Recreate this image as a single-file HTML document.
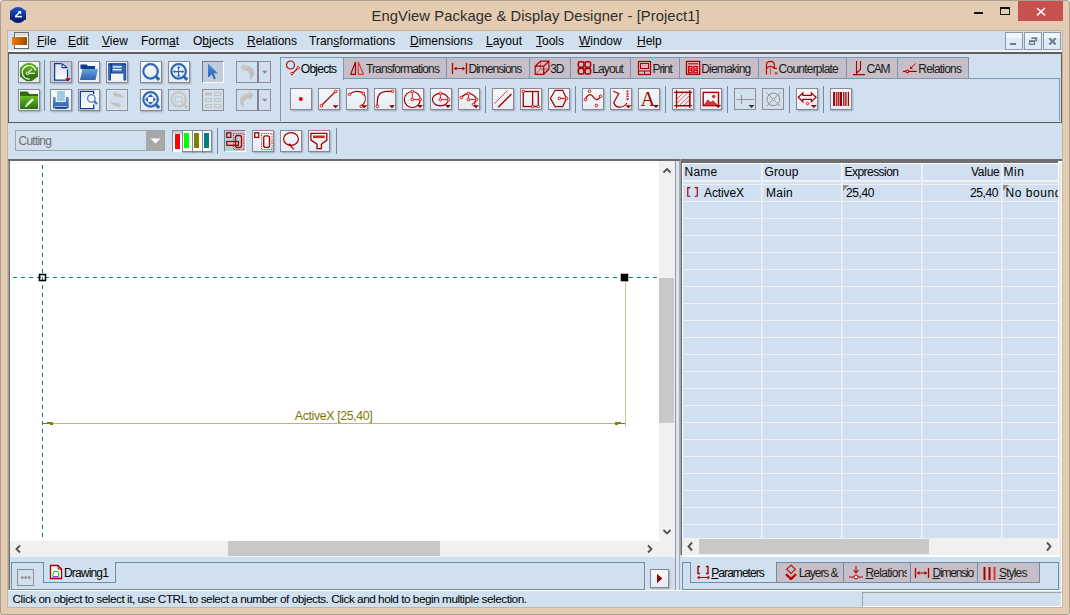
<!DOCTYPE html>
<html><head><meta charset="utf-8"><style>
*{box-sizing:border-box;margin:0;padding:0}
html,body{width:1070px;height:615px;overflow:hidden;background:#fff;font-family:"Liberation Sans",sans-serif;font-size:12px;color:#000}
.a{position:absolute}
.t{position:absolute;white-space:nowrap;line-height:1}
.btn{position:absolute;width:22px;height:22px;border:1px solid #8A8794;background:linear-gradient(#f4f7fb,#e7edf4);box-shadow:1px 1px 1px rgba(70,80,100,.30)}
.btn.sel{background:#C8CFDB}
.btn svg{position:absolute;left:0;top:0}
.sep{position:absolute;width:1px;background:#7288A4}
.tab{position:absolute;height:21px;background:#C6BFC7;border:1px solid #7E96B2;border-bottom:none}
.tab .t{font-size:12px;color:#1a1a1a}
.u{text-decoration:underline}
</style></head><body>
<div class="a" style="left:0;top:0;width:1070px;height:615px;background:#E3CCB2;border:1px solid #AD9E8F;border-radius:3px 3px 2px 2px"></div>
<div class="a" style="left:7px;top:30px;width:1056px;height:578px;border:1px solid #C8B39D;background:#D1E0EF"></div>
<div class="t" style="left:371.6px;top:9px;font-size:14.75px;color:#2E2E2E;letter-spacing:0.08px">EngView Package &amp; Display Designer - [Project1]</div>
<svg class="a" style="left:9px;top:6px;" width="18" height="18" viewBox="0 0 18 18"><defs><linearGradient id="ig" x1="0" y1="0" x2="0" y2="1"><stop offset="0" stop-color="#1E50C4"/><stop offset="1" stop-color="#001868"/></linearGradient></defs><rect x="1" y="4.3" width="16" height="9.5" fill="url(#ig)"/><circle cx="9" cy="9" r="8" fill="url(#ig)"/><path d="M6 10.6h7" stroke="#fff" stroke-width="1.5"/><path d="M6.6 10.3l4.8-4.8" stroke="#fff" stroke-width="1.4"/><path d="M8.6 5h3.6v3.6z" fill="#fff"/></svg>
<div class="a" style="left:974px;top:12px;width:9px;height:2px;background:#111;"></div>
<div class="a" style="left:1000px;top:7px;width:10px;height:8px;border:1px solid #111;border-top-width:2px"></div>
<div class="a" style="left:1018px;top:1px;width:45px;height:20px;background:#C75050;"></div>
<svg class="a" style="left:1036px;top:7px;" width="10" height="10" viewBox="0 0 10 10"><path d="M1 1l8 7.3M9 1l-8 7.3" stroke="#fff" stroke-width="1.6"/></svg>
<div class="a" style="left:8px;top:31px;width:1054px;height:19px;background:#D1E0EF;"></div>
<div class="a" style="left:8px;top:50px;width:1054px;height:2px;background:#F2F5F8;"></div>
<div class="a" style="left:8px;top:52px;width:1054px;height:2px;background:#5F5F5F;"></div>
<div class="a" style="left:14px;top:32px;width:15px;height:17px;border:1px solid #6b6b6b;background:#fff"></div>
<div class="a" style="left:15px;top:33px;width:13px;height:3px;background:#ddd;"></div>
<div class="a" style="left:12px;top:37px;width:15px;height:8px;background:linear-gradient(90deg,#F47B00,#9A4A00);"></div>
<div class="t" style="left:37px;top:35px;font-size:12px;color:#000;"><span class="u">F</span>ile</div>
<div class="t" style="left:68px;top:35px;font-size:12px;color:#000;"><span class="u">E</span>dit</div>
<div class="t" style="left:102px;top:35px;font-size:12px;color:#000;"><span class="u">V</span>iew</div>
<div class="t" style="left:141px;top:35px;font-size:12px;color:#000;">Form<span class="u">a</span>t</div>
<div class="t" style="left:193px;top:35px;font-size:12px;color:#000;">O<span class="u">b</span>jects</div>
<div class="t" style="left:247px;top:35px;font-size:12px;color:#000;"><span class="u">R</span>elations</div>
<div class="t" style="left:309px;top:35px;font-size:12px;color:#000;">Tran<span class="u">s</span>formations</div>
<div class="t" style="left:410px;top:35px;font-size:12px;color:#000;"><span class="u">D</span>imensions</div>
<div class="t" style="left:486px;top:35px;font-size:12px;color:#000;"><span class="u">L</span>ayout</div>
<div class="t" style="left:536px;top:35px;font-size:12px;color:#000;"><span class="u">T</span>ools</div>
<div class="t" style="left:579px;top:35px;font-size:12px;color:#000;"><span class="u">W</span>indow</div>
<div class="t" style="left:637px;top:35px;font-size:12px;color:#000;"><span class="u">H</span>elp</div>
<div class="a" style="left:1005px;top:32px;width:18px;height:18px;border:1px solid #8C9BAE;background:linear-gradient(#F0F6FC 0,#F0F6FC 30%,#DEEAF6 30%,#DEEAF6)"></div>
<div class="a" style="left:1024px;top:32px;width:18px;height:18px;border:1px solid #8C9BAE;background:linear-gradient(#F0F6FC 0,#F0F6FC 30%,#DEEAF6 30%,#DEEAF6)"></div>
<div class="a" style="left:1043px;top:32px;width:18px;height:18px;border:1px solid #8C9BAE;background:linear-gradient(#F0F6FC 0,#F0F6FC 30%,#DEEAF6 30%,#DEEAF6)"></div>
<div class="a" style="left:1004px;top:31px;width:58px;height:19px;background:#F4F7FA;z-index:-1"></div>
<svg class="a" style="left:1005px;top:32px;" width="18" height="18" viewBox="0 0 18 18"><rect x="5" y="11" width="6" height="2" fill="#6C7B8B"/></svg>
<svg class="a" style="left:1024px;top:32px;" width="18" height="18" viewBox="0 0 18 18"><path d="M7.4 6.1h5.4M12.3 5.2v4.4" stroke="#6C7B8B" stroke-width="1.8" fill="none"/><path d="M5.5 9.7h5v2.7h-5z" stroke="#6C7B8B" stroke-width="1.1" fill="none"/><path d="M5 9h6" stroke="#6C7B8B" stroke-width="1.8"/></svg>
<svg class="a" style="left:1043px;top:32px;" width="18" height="18" viewBox="0 0 18 18"><path d="M6.3 6.3l6.4 6.2M12.7 6.3l-6.4 6.2" stroke="#6C7B8B" stroke-width="2"/></svg>
<div class="a" style="left:8px;top:54px;width:1054px;height:68px;background:#D1E0EF;"></div>
<div class="a" style="left:8px;top:54px;width:1px;height:68px;background:#5F5F5F;"></div>
<div class="a" style="left:1061px;top:54px;width:1px;height:68px;background:#5F5F5F;"></div>
<div class="a" style="left:8px;top:122px;width:1054px;height:1px;background:#5A5A5A;"></div>
<svg class="a" style="left:0px;top:0px;" width="1" height="1" viewBox="0 0 1 1"><defs><linearGradient id="pg" x1="0" y1="0" x2="0" y2="1"><stop offset="0" stop-color="#e2e2f4"/><stop offset="1" stop-color="#fff"/></linearGradient><linearGradient id="fg" x1="0" y1="0" x2="0" y2="1"><stop offset="0" stop-color="#6AA0DA"/><stop offset="1" stop-color="#2E62B0"/></linearGradient><linearGradient id="gg" x1="0" y1="0" x2="0" y2="1"><stop offset="0" stop-color="#5DB21C"/><stop offset="1" stop-color="#2A700C"/></linearGradient><linearGradient id="gg2" x1="0" y1="0" x2="0" y2="1"><stop offset="0" stop-color="#66C024"/><stop offset="1" stop-color="#2A700C"/></linearGradient></defs></svg>
<div class="a" style="left:18px;top:61px;width:22px;height:22px;border:1px solid #8A8794;background:linear-gradient(#f5f8fb,#e6ecf3);box-shadow:1px 1px 1.5px rgba(60,70,90,.35)"></div>
<svg class="a" style="left:18px;top:61px;" width="22" height="22" viewBox="0 0 22 22"><circle cx="11" cy="11" r="9.3" fill="url(#gg)"/><rect x="2" y="6" width="18" height="10" fill="url(#gg)"/><path d="M17.6 9.6A6.8 6.8 0 1 0 11.6 18.1" stroke="#fff" stroke-width="1.1" fill="none"/><path d="M9.5 12.3l4.3-4.1M9.5 12.3h7.5" stroke="#fff" stroke-width="1.1"/><circle cx="9.5" cy="12.3" r="1.3" fill="#3a8a12" stroke="#fff" stroke-width="1"/></svg>
<div class="a" style="left:44px;top:60px;width:1px;height:51px;background:#7189A5;"></div>
<div class="a" style="left:50px;top:61px;width:22px;height:22px;border:1px solid #8E8C98;background:#C7CEDB;box-shadow:1px 1px 1.5px rgba(60,70,90,.35)"></div>
<svg class="a" style="left:50px;top:61px;" width="22" height="22" viewBox="0 0 22 22"><path d="M4.6 2.7H12V19H4.6z" fill="url(#pg)"/><path d="M4.6 6.6H17.4V19H4.6z" fill="url(#pg)"/><path d="M11.5 2.7H4.6V19.1H17.5V8.6" fill="none" stroke="#0B3F8F" stroke-width="1.25"/><path d="M12 2.8V6.6H17.2Z" fill="#fff" stroke="#0B3F8F" stroke-width="1.1" stroke-linejoin="bevel"/><path d="M15 17.3h6l-3 3.3z" fill="#C00000"/></svg>
<div class="a" style="left:78px;top:61px;width:22px;height:22px;border:1px solid #8A8794;background:linear-gradient(#f5f8fb,#e6ecf3);box-shadow:1px 1px 1.5px rgba(60,70,90,.35)"></div>
<svg class="a" style="left:78px;top:61px;" width="22" height="22" viewBox="0 0 22 22"><path d="M2.5 3.5h6l1.5 1.5h7v3H2.5z" fill="#0B3F8F"/><path d="M4.5 8h15.5l-2.5 11H2z" fill="url(#fg)"/></svg>
<div class="a" style="left:106px;top:61px;width:22px;height:22px;border:1px solid #8A8794;background:linear-gradient(#f5f8fb,#e6ecf3);box-shadow:1px 1px 1.5px rgba(60,70,90,.35)"></div>
<svg class="a" style="left:106px;top:61px;" width="22" height="22" viewBox="0 0 22 22"><defs><linearGradient id="fb" x1="0" y1="0" x2="1" y2="0"><stop offset="0" stop-color="#0B3F8F"/><stop offset=".5" stop-color="#3A70C0"/><stop offset="1" stop-color="#0B3F8F"/></linearGradient></defs><rect x="2.4" y="2.4" width="17.6" height="17.4" fill="#F2F5FA"/><rect x="2.2" y="2.3" width="2.8" height="17.5" rx="1.2" fill="url(#fb)"/><rect x="17.4" y="2.3" width="2.8" height="17.5" rx="1.2" fill="url(#fb)"/><rect x="2.5" y="2.3" width="17.4" height="1.4" fill="#0B3F8F"/><rect x="5.5" y="3" width="11.4" height="9" fill="#3F78C4" stroke="#0B3F8F" stroke-width="1"/><path d="M6.8 5.9h8.8M6.8 8.6h8.8" stroke="#fff" stroke-width="1.2"/></svg>
<div class="a" style="left:18px;top:89px;width:22px;height:22px;border:1px solid #8A8794;background:linear-gradient(#f5f8fb,#e6ecf3);box-shadow:1px 1px 1.5px rgba(60,70,90,.35)"></div>
<svg class="a" style="left:18px;top:89px;" width="22" height="22" viewBox="0 0 22 22"><path d="M2 2.5h7.5l2 2.5H20v15H2z" fill="#2E6A10"/><rect x="2" y="7" width="18" height="13" fill="url(#gg2)"/><path d="M9 16l6-6" stroke="#fff" stroke-width="2.4"/><path d="M7 18.2l.9-2.6 1.7 1.7z" fill="#fff"/></svg>
<div class="a" style="left:50px;top:89px;width:22px;height:22px;border:1px solid #8A8794;background:linear-gradient(#f5f8fb,#e6ecf3);box-shadow:1px 1px 1.5px rgba(60,70,90,.35)"></div>
<svg class="a" style="left:50px;top:89px;" width="22" height="22" viewBox="0 0 22 22"><defs><linearGradient id="prg" x1="0" y1="0" x2="0" y2="1"><stop offset="0" stop-color="#5A90D4"/><stop offset="1" stop-color="#2A5EA8"/></linearGradient></defs><rect x="7.1" y="2" width="7.8" height="10" fill="#9DCBE4"/><path d="M3 19.3V9.2Q3 8.1 4.2 8.1H5.6V12.9H15.9V8.1H17.5Q18.7 8.1 18.7 9.2V19.3z" fill="url(#prg)"/><rect x="4.6" y="17.4" width="12.6" height="0.8" fill="#EDF2F8"/><rect x="5.1" y="18.2" width="11.8" height="1.6" fill="#0B3A8A"/></svg>
<div class="a" style="left:78px;top:89px;width:22px;height:22px;border:1px solid #8A8794;background:linear-gradient(#f5f8fb,#e6ecf3);box-shadow:1px 1px 1.5px rgba(60,70,90,.35)"></div>
<svg class="a" style="left:78px;top:89px;" width="22" height="22" viewBox="0 0 22 22"><path d="M2.3 2.3H15.7V19.7H2.3z" fill="url(#pg)"/><path d="M15.7 5V2.3H2.3V19.7H15.7V15.5" fill="none" stroke="#0B3F8F" stroke-width="1.3"/><circle cx="13.4" cy="9.4" r="3.8" fill="#F0F0F8" stroke="#4A80C8" stroke-width="1.3"/><path d="M16 12l3 3" stroke="#3A70C0" stroke-width="2.2"/></svg>
<div class="a" style="left:106px;top:89px;width:22px;height:22px;border:1px solid #8E8C98;background:#D1E0EF"></div>
<svg class="a" style="left:106px;top:89px;" width="22" height="22" viewBox="0 0 22 22"><rect x="1.5" y="1.5" width="19" height="19" fill="none" stroke="#E2ECF6"/><path d="M6.8 5.3L10 2.3V4.2Q16 4.6 17.8 9.8Q14.5 7.2 10 7.4V8.6Z" fill="#C2BFBA"/><path d="M15 16.3L11.8 19.3V17.4Q5.8 17 4 11.8Q7.3 14.4 11.8 14.2V13Z" fill="#C2BFBA"/></svg>
<div class="a" style="left:140px;top:61px;width:22px;height:22px;border:1px solid #8A8794;background:linear-gradient(#f5f8fb,#e6ecf3);box-shadow:1px 1px 1.5px rgba(60,70,90,.35)"></div>
<svg class="a" style="left:140px;top:61px;" width="22" height="22" viewBox="0 0 22 22"><circle cx="10.6" cy="10.3" r="7.2" fill="none" stroke="#2A64B4" stroke-width="2.3"/><circle cx="10.6" cy="10.3" r="6.1" fill="none" stroke="#9DBFE6" stroke-width=".6"/><path d="M15.6 15.3l3.6 3.6" stroke="#2A64B4" stroke-width="3"/></svg>
<div class="a" style="left:168px;top:61px;width:22px;height:22px;border:1px solid #8A8794;background:linear-gradient(#f5f8fb,#e6ecf3);box-shadow:1px 1px 1.5px rgba(60,70,90,.35)"></div>
<svg class="a" style="left:168px;top:61px;" width="22" height="22" viewBox="0 0 22 22"><circle cx="10.6" cy="10.3" r="7.2" fill="none" stroke="#2A64B4" stroke-width="2.3"/><circle cx="10.6" cy="10.3" r="6.1" fill="none" stroke="#9DBFE6" stroke-width=".6"/><path d="M15.6 15.3l3.6 3.6" stroke="#2A64B4" stroke-width="3"/><path d="M10.6 6v9.2M6 10.6h9.2" stroke="#2A64B4" stroke-width="1.1"/><path d="M10.6 5l-1.7 2.1h3.4zM10.6 16.1l-1.7-2.1h3.4zM5 10.6l2.1-1.7v3.4zM16.2 10.6l-2.1-1.7v3.4z" fill="#2A64B4"/></svg>
<div class="a" style="left:140px;top:89px;width:22px;height:22px;border:1px solid #8A8794;background:linear-gradient(#f5f8fb,#e6ecf3);box-shadow:1px 1px 1.5px rgba(60,70,90,.35)"></div>
<svg class="a" style="left:140px;top:89px;" width="22" height="22" viewBox="0 0 22 22"><circle cx="10.6" cy="10.3" r="7.2" fill="none" stroke="#2A64B4" stroke-width="2.3"/><circle cx="10.6" cy="10.3" r="6.1" fill="none" stroke="#9DBFE6" stroke-width=".6"/><path d="M15.6 15.3l3.6 3.6" stroke="#2A64B4" stroke-width="3"/><path d="M10.5 5l5.4 5.4-5.4 5.4-5.4-5.4z" fill="#2A64B4"/><rect x="8" y="8" width="5.2" height="5" fill="#fff"/></svg>
<div class="a" style="left:168px;top:89px;width:22px;height:22px;border:1px solid #8E8C98;background:#D1E0EF"></div>
<svg class="a" style="left:168px;top:89px;" width="22" height="22" viewBox="0 0 22 22"><circle cx="10.6" cy="10.3" r="7.2" fill="none" stroke="#C8C6C2" stroke-width="2.3"/><path d="M15.6 15.3l3.6 3.6" stroke="#C8C6C2" stroke-width="3"/><rect x="7" y="8" width="7" height="5" fill="none" stroke="#C4C2BE"/></svg>
<div class="a" style="left:202px;top:61px;width:22px;height:22px;border:1px solid #7E7C88;border-right-color:#fff;border-bottom-color:#fff;background:#C2CBDB"></div>
<svg class="a" style="left:202px;top:61px;" width="22" height="22" viewBox="0 0 22 22"><defs><linearGradient id="sg" x1="0" y1="0" x2="0" y2="1"><stop offset="0" stop-color="#4E8EDA"/><stop offset="1" stop-color="#2660B0"/></linearGradient></defs><path d="M6 2.5L15.8 12.3L11.6 12.5L13.8 17.6L12.1 18.5L9.8 13.4L6 16.4Z" fill="url(#sg)"/></svg>
<div class="a" style="left:202px;top:89px;width:22px;height:22px;border:1px solid #8E8C98;background:#D1E0EF"></div>
<svg class="a" style="left:202px;top:89px;" width="22" height="22" viewBox="0 0 22 22"><rect x="3" y="3.5" width="7" height="3.2" fill="#C4C2BE"/><path d="M12.5 3.8h6v2.7h-6zM3.5 9.8h6v2.7h-6zM12.5 9.8h6v2.7h-6zM3.5 15.8h6v2.7h-6zM12.5 15.8h6v2.7h-6z" fill="none" stroke="#C4C2BE" stroke-width="1.1"/></svg>
<div class="a" style="left:236px;top:61px;width:35px;height:22px;border:1px solid #8E8C98;background:#D1E0EF"></div>
<div class="a" style="left:257px;top:61px;width:2px;height:22px;background:#84828E;"></div>
<svg class="a" style="left:236px;top:61px;" width="22" height="22" viewBox="0 0 22 22"><defs><linearGradient id="ug" x1="0" y1="0" x2="1" y2="1"><stop offset="0" stop-color="#CFCCC8"/><stop offset="1" stop-color="#B9B6B1"/></linearGradient></defs><path d="M4.1 6.3L8.4 2V4.3C14 4.3 18 7.5 18 12C18 15 16 17.5 13.5 18.9C15 16 14.5 9.5 8.4 9.2V10.7Z" fill="url(#ug)"/></svg>
<svg class="a" style="left:259px;top:61px;" width="12" height="22" viewBox="0 0 12 22"><path d="M3 9.8h5.5l-2.75 3z" fill="#8E8C88"/></svg>
<div class="a" style="left:236px;top:89px;width:35px;height:22px;border:1px solid #8E8C98;background:#D1E0EF"></div>
<div class="a" style="left:257px;top:89px;width:2px;height:22px;background:#84828E;"></div>
<svg class="a" style="left:236px;top:89px;" width="22" height="22" viewBox="0 0 22 22"><path d="M17.7 6.3L13.4 2V4.3C7.8 4.3 3.8 7.5 3.8 12C3.8 15 5.8 17.5 8.3 18.9C6.8 16 7.3 9.5 13.4 9.2V10.7Z" fill="url(#ug)"/></svg>
<svg class="a" style="left:259px;top:89px;" width="12" height="22" viewBox="0 0 12 22"><path d="M3 9.8h5.5l-2.75 3z" fill="#8E8C88"/></svg>
<div class="a" style="left:280px;top:78px;width:780px;height:1px;background:#7E96B2;"></div>
<div class="a" style="left:280px;top:57px;width:1px;height:64px;background:#7E96B2;"></div>
<div class="a" style="left:1059px;top:78px;width:1px;height:43px;background:#7E96B2;"></div>
<div class="a" style="left:343px;top:57px;width:104px;height:22px;background:#C6BFC7;border:1px solid #7E96B2"></div>
<div class="t" style="left:366px;top:62.5px;font-size:12px;color:#1a1a1a;letter-spacing:-0.883px;">Transformations</div>
<div class="a" style="left:446px;top:57px;width:84px;height:22px;background:#C6BFC7;border:1px solid #7E96B2"></div>
<div class="t" style="left:468.5px;top:62.5px;font-size:12px;color:#1a1a1a;letter-spacing:-0.989px;">Dimensions</div>
<div class="a" style="left:529px;top:57px;width:42px;height:22px;background:#C6BFC7;border:1px solid #7E96B2"></div>
<div class="t" style="left:550.3px;top:62.5px;font-size:12px;color:#1a1a1a;letter-spacing:-1.270px;">3D</div>
<div class="a" style="left:570px;top:57px;width:61px;height:22px;background:#C6BFC7;border:1px solid #7E96B2"></div>
<div class="t" style="left:592.2px;top:62.5px;font-size:12px;color:#1a1a1a;letter-spacing:-0.871px;">Layout</div>
<div class="a" style="left:630px;top:57px;width:50px;height:22px;background:#C6BFC7;border:1px solid #7E96B2"></div>
<div class="t" style="left:652.5px;top:62.5px;font-size:12px;color:#1a1a1a;letter-spacing:-1.115px;">Print</div>
<div class="a" style="left:679px;top:57px;width:80px;height:22px;background:#C6BFC7;border:1px solid #7E96B2"></div>
<div class="t" style="left:701.3px;top:62.5px;font-size:12px;color:#1a1a1a;letter-spacing:-0.854px;">Diemaking</div>
<div class="a" style="left:758px;top:57px;width:89px;height:22px;background:#C6BFC7;border:1px solid #7E96B2"></div>
<div class="t" style="left:778.6px;top:62.5px;font-size:12px;color:#1a1a1a;letter-spacing:-0.776px;">Counterplate</div>
<div class="a" style="left:846px;top:57px;width:52px;height:22px;background:#C6BFC7;border:1px solid #7E96B2"></div>
<div class="t" style="left:866.4px;top:62.5px;font-size:12px;color:#1a1a1a;letter-spacing:-1.255px;">CAM</div>
<div class="a" style="left:897px;top:57px;width:72px;height:22px;background:#C6BFC7;border:1px solid #7E96B2"></div>
<div class="t" style="left:918.3px;top:62.5px;font-size:12px;color:#1a1a1a;letter-spacing:-0.803px;">Relations</div>
<div class="a" style="left:280px;top:57px;width:64px;height:23px;background:#D1E0EF;border:1px solid #7E96B2;border-bottom:none"></div>
<div class="t" style="left:300.8px;top:62.5px;font-size:12px;color:#000;letter-spacing:-0.740px;">Objects</div>
<svg class="a" style="left:284px;top:59px;" width="18" height="18" viewBox="0 0 18 18"><circle cx="6.5" cy="6" r="4" fill="none" stroke="#A01010" stroke-width="1.2"/><path d="M8.5 14.5l5-5" stroke="#A01010" stroke-width="1.1"/><circle cx="8" cy="14.6" r="1.2" fill="#fff" stroke="#E00000" stroke-width="1"/><circle cx="14.2" cy="8.7" r="1.2" fill="#fff" stroke="#E00000" stroke-width="1"/></svg>
<svg class="a" style="left:348px;top:59px;" width="18" height="18" viewBox="0 0 18 18"><path d="M2.6 15.4h4.9V3z" fill="none" stroke="#A00000" stroke-width="1.2" stroke-linejoin="bevel"/><path d="M10.3 3v12.4h5.3z" fill="none" stroke="#E03C3C" stroke-width="1.2" stroke-linejoin="bevel"/></svg>
<svg class="a" style="left:451px;top:59px;" width="18" height="18" viewBox="0 0 18 18"><path d="M1.5 4v11M15.5 4v11" stroke="#B00000" stroke-width="1.3"/><path d="M3 9.5h11" stroke="#B00000" stroke-width="1"/><path d="M3 9.5l2.5-2v4zM14 9.5l-2.5-2v4z" fill="#B00000"/></svg>
<svg class="a" style="left:533px;top:59px;" width="18" height="18" viewBox="0 0 18 18"><path d="M7.5 2.1v8.1h8.4M7.5 10.2l-5.3 5.1" fill="none" stroke="#E04848" stroke-width=".9"/><path d="M2.2 7.2h8.5v8.1H2.2zM2.2 7.2l5.3-5.1h8.4v8.1l-5.2 5.1M10.7 7.2l5.2-5.1" fill="none" stroke="#B00000" stroke-width="1.2"/></svg>
<svg class="a" style="left:575.5px;top:59px;" width="18" height="18" viewBox="0 0 18 18"><rect x="2.3" y="2.7" width="5.6" height="5.6" rx="1.6" fill="none" stroke="#B00000" stroke-width="1.6"/><rect x="9" y="2.7" width="5.6" height="5.6" rx="1.6" fill="none" stroke="#B00000" stroke-width="1.6"/><rect x="2.3" y="9.4" width="5.6" height="5.6" rx="1.6" fill="none" stroke="#B00000" stroke-width="1.6"/><rect x="9" y="9.4" width="5.6" height="5.6" rx="1.6" fill="none" stroke="#B00000" stroke-width="1.6"/></svg>
<svg class="a" style="left:635.5px;top:59px;" width="18" height="18" viewBox="0 0 18 18"><rect x="2.5" y="2.5" width="12" height="13" fill="none" stroke="#B00000" stroke-width="1.2"/><rect x="4.5" y="4.5" width="8" height="5" fill="none" stroke="#B00000" stroke-width="1"/><path d="M2.5 12h12M8.5 12v3.5" stroke="#B00000" stroke-width="1"/></svg>
<svg class="a" style="left:685px;top:59px;" width="18" height="18" viewBox="0 0 18 18"><rect x="1.5" y="2.4" width="13.2" height="12.9" fill="none" stroke="#A80000" stroke-width="1.3"/><path d="M3 4.8h10.2" stroke="#C00000" stroke-width="1.1"/><rect x="3" y="6.9" width="4.6" height="3.6" fill="#C00000"/><rect x="4.3" y="8.0" width="2" height="1.4" fill="#E8B8B8"/><rect x="8.3" y="6.9" width="4.6" height="3.6" fill="#C00000"/><rect x="9.600000000000001" y="8.0" width="2" height="1.4" fill="#E8B8B8"/><rect x="3" y="10.7" width="4.6" height="3.6" fill="#C00000"/><rect x="4.3" y="11.799999999999999" width="2" height="1.4" fill="#E8B8B8"/><rect x="8.3" y="10.7" width="4.6" height="3.6" fill="#C00000"/><rect x="9.600000000000001" y="11.799999999999999" width="2" height="1.4" fill="#E8B8B8"/></svg>
<svg class="a" style="left:762px;top:59px;" width="18" height="18" viewBox="0 0 18 18"><path d="M4.5 15.6V5.8Q4.5 2.3 8.4 2.3T12.3 5.8V9.4H14.9" fill="none" stroke="#C80000" stroke-width="1.2"/><path d="M4.8 9.4Q6.3 7.2 8.4 7.2T11.8 9.4" fill="none" stroke="#C80000" stroke-width="1.1"/><path d="M8.4 7.5V15.6" stroke="#E04040" stroke-width="1"/><path d="M12.9 13.1l2.4 2.4M15.3 13.1l-2.4 2.4" stroke="#C00000" stroke-width=".9"/></svg>
<svg class="a" style="left:850px;top:59px;" width="18" height="18" viewBox="0 0 18 18"><path d="M6.5 2.1V15.6M10.5 2.1V10.4L6.5 14M3 15.6H15" fill="none" stroke="#A80000" stroke-width="1.1"/></svg>
<svg class="a" style="left:900px;top:59px;" width="18" height="18" viewBox="0 0 18 18"><path d="M3 12.4H16.9" stroke="#A00000" stroke-width="1.2"/><circle cx="7.4" cy="12.4" r="1.3" fill="#fff" stroke="#E00000" stroke-width="1.2"/><path d="M15.6 4.4L11.2 8.8" stroke="#C00000" stroke-width="1"/><path d="M10 6.9V9.9H13Z" fill="#C00000"/></svg>
<div class="a" style="left:290px;top:88px;width:22px;height:22px;border:1px solid #8A8794;background:linear-gradient(#f5f8fb,#e6ecf3);box-shadow:1px 1px 1.5px rgba(60,70,90,.35)"></div>
<svg class="a" style="left:290px;top:88px;" width="22" height="22" viewBox="0 0 22 22"><circle cx="10.8" cy="11" r="2" fill="#E00000"/></svg>
<div class="a" style="left:318px;top:88px;width:22px;height:22px;border:1px solid #8A8794;background:linear-gradient(#f5f8fb,#e6ecf3);box-shadow:1px 1px 1.5px rgba(60,70,90,.35)"></div>
<svg class="a" style="left:318px;top:88px;" width="22" height="22" viewBox="0 0 22 22"><path d="M3.5 17.5l14-14" stroke="#A00000" stroke-width="1.1"/><circle cx="3.5" cy="17.8" r="1.3" fill="#fff" stroke="#E00000" stroke-width="1"/><circle cx="17.8" cy="3.5" r="1.3" fill="#fff" stroke="#E00000" stroke-width="1"/><path d="M14.5 17.3h6l-3 3z" fill="#8B0000"/></svg>
<div class="a" style="left:346px;top:88px;width:22px;height:22px;border:1px solid #8A8794;background:linear-gradient(#f5f8fb,#e6ecf3);box-shadow:1px 1px 1.5px rgba(60,70,90,.35)"></div>
<svg class="a" style="left:346px;top:88px;" width="22" height="22" viewBox="0 0 22 22"><path d="M3.4 6.4C7 2.5 14 2.5 17.3 5.3C20.5 9 20 14 15.5 18.3" fill="none" stroke="#A00000" stroke-width="1.2"/><circle cx="3.4" cy="6.4" r="1.3" fill="#fff" stroke="#E00000" stroke-width="1"/><circle cx="17.3" cy="5.3" r="1.3" fill="#fff" stroke="#E00000" stroke-width="1"/><circle cx="15.3" cy="18.3" r="1.3" fill="#fff" stroke="#E00000" stroke-width="1"/><path d="M15.3 17.2h6l-3 3z" fill="#8B0000"/></svg>
<div class="a" style="left:374px;top:88px;width:22px;height:22px;border:1px solid #8A8794;background:linear-gradient(#f5f8fb,#e6ecf3);box-shadow:1px 1px 1.5px rgba(60,70,90,.35)"></div>
<svg class="a" style="left:374px;top:88px;" width="22" height="22" viewBox="0 0 22 22"><path d="M3.3 18.3V13Q3.5 4 12 3.4H18.5" fill="none" stroke="#A00000" stroke-width="1.2"/><circle cx="3.3" cy="18.3" r="1.3" fill="#fff" stroke="#E00000" stroke-width="1"/><circle cx="18.5" cy="3.3" r="1.3" fill="#fff" stroke="#E00000" stroke-width="1"/><path d="M15 17.2h6l-3 3z" fill="#8B0000"/></svg>
<div class="a" style="left:402px;top:88px;width:22px;height:22px;border:1px solid #8A8794;background:linear-gradient(#f5f8fb,#e6ecf3);box-shadow:1px 1px 1.5px rgba(60,70,90,.35)"></div>
<svg class="a" style="left:402px;top:88px;" width="22" height="22" viewBox="0 0 22 22"><circle cx="10.3" cy="11.5" r="8" fill="none" stroke="#A00000" stroke-width="1.2"/><path d="M10.3 3.5v8h8" fill="none" stroke="#D02020" stroke-width="1"/><circle cx="10.3" cy="3.5" r="1.3" fill="#fff" stroke="#E00000" stroke-width="1"/><circle cx="10.3" cy="11.5" r="1.3" fill="#fff" stroke="#E00000" stroke-width="1"/><circle cx="18.3" cy="11.5" r="1.3" fill="#fff" stroke="#E00000" stroke-width="1"/><path d="M15 17h6l-3 3z" fill="#8B0000"/></svg>
<div class="a" style="left:430px;top:88px;width:22px;height:22px;border:1px solid #8A8794;background:linear-gradient(#f5f8fb,#e6ecf3);box-shadow:1px 1px 1.5px rgba(60,70,90,.35)"></div>
<svg class="a" style="left:430px;top:88px;" width="22" height="22" viewBox="0 0 22 22"><ellipse cx="10.4" cy="11.6" rx="8" ry="6.2" fill="none" stroke="#A00000" stroke-width="1.2"/><path d="M10.4 5.4v6.2h8" fill="none" stroke="#D02020" stroke-width="1"/><circle cx="10.4" cy="5.4" r="1.3" fill="#fff" stroke="#E00000" stroke-width="1"/><circle cx="10.4" cy="11.6" r="1.3" fill="#fff" stroke="#E00000" stroke-width="1"/><circle cx="18.4" cy="11.6" r="1.3" fill="#fff" stroke="#E00000" stroke-width="1"/><path d="M15 17h6l-3 3z" fill="#8B0000"/></svg>
<div class="a" style="left:458px;top:88px;width:22px;height:22px;border:1px solid #8A8794;background:linear-gradient(#f5f8fb,#e6ecf3);box-shadow:1px 1px 1.5px rgba(60,70,90,.35)"></div>
<svg class="a" style="left:458px;top:88px;" width="22" height="22" viewBox="0 0 22 22"><path d="M3.3 9.5Q10 3 15 7Q19 10 18.6 11.6L15.6 16.4" fill="none" stroke="#A00000" stroke-width="1.2"/><path d="M10.4 5.4v6.2h8" fill="none" stroke="#D02020" stroke-width="1"/><circle cx="3.3" cy="9.5" r="1.3" fill="#fff" stroke="#E00000" stroke-width="1"/><circle cx="10.4" cy="5.4" r="1.3" fill="#fff" stroke="#E00000" stroke-width="1"/><circle cx="10.4" cy="11.6" r="1.3" fill="#fff" stroke="#E00000" stroke-width="1"/><circle cx="18.6" cy="11.6" r="1.3" fill="#fff" stroke="#E00000" stroke-width="1"/><circle cx="15.6" cy="16.4" r="1.3" fill="#fff" stroke="#E00000" stroke-width="1"/><path d="M15 17.2h6l-3 3z" fill="#8B0000"/></svg>
<div class="a" style="left:485px;top:86px;width:1px;height:27px;background:#7189A5;"></div>
<div class="a" style="left:492px;top:88px;width:22px;height:22px;border:1px solid #8A8794;background:linear-gradient(#f5f8fb,#e6ecf3);box-shadow:1px 1px 1.5px rgba(60,70,90,.35)"></div>
<svg class="a" style="left:492px;top:88px;" width="22" height="22" viewBox="0 0 22 22"><path d="M2.3 15.7L15.6 2.3" stroke="#E04040" stroke-width="1"/><path d="M6.2 19.3L19.5 6.1" stroke="#A00000" stroke-width="1.4"/></svg>
<div class="a" style="left:520px;top:88px;width:22px;height:22px;border:1px solid #8A8794;background:linear-gradient(#f5f8fb,#e6ecf3);box-shadow:1px 1px 1.5px rgba(60,70,90,.35)"></div>
<svg class="a" style="left:520px;top:88px;" width="22" height="22" viewBox="0 0 22 22"><rect x="3.3" y="3.5" width="15" height="15" fill="none" stroke="#A00000" stroke-width="1.3"/><path d="M12.6 3.5v15" stroke="#A00000" stroke-width="1.3"/><circle cx="3.3" cy="3.5" r="1.3" fill="#fff" stroke="#E00000" stroke-width="1"/><circle cx="12.6" cy="18.5" r="1.3" fill="#fff" stroke="#E00000" stroke-width="1"/><circle cx="18.3" cy="18.5" r="1.3" fill="#fff" stroke="#E00000" stroke-width="1"/></svg>
<div class="a" style="left:548px;top:88px;width:22px;height:22px;border:1px solid #8A8794;background:linear-gradient(#f5f8fb,#e6ecf3);box-shadow:1px 1px 1.5px rgba(60,70,90,.35)"></div>
<svg class="a" style="left:548px;top:88px;" width="22" height="22" viewBox="0 0 22 22"><path d="M7.1 2.3h7.5l3.9 8.1-3.9 8.2h-7.5l-4.7-8.2z" fill="none" stroke="#A00000" stroke-width="1.2"/><path d="M11.3 10.4h7.2" stroke="#C01010" stroke-width="1"/><circle cx="11.3" cy="10.4" r="1.3" fill="#fff" stroke="#E00000" stroke-width="1"/><circle cx="18.5" cy="10.4" r="1.3" fill="#fff" stroke="#E00000" stroke-width="1"/></svg>
<div class="a" style="left:575px;top:86px;width:1px;height:27px;background:#7189A5;"></div>
<div class="a" style="left:582px;top:88px;width:22px;height:22px;border:1px solid #8A8794;background:linear-gradient(#f5f8fb,#e6ecf3);box-shadow:1px 1px 1.5px rgba(60,70,90,.35)"></div>
<svg class="a" style="left:582px;top:88px;" width="22" height="22" viewBox="0 0 22 22"><path d="M3.5 11.5C5 7 8 5 10.5 8S15 14.5 18.6 8.2" fill="none" stroke="#A00000" stroke-width="1.2"/><circle cx="3.5" cy="11.5" r="1.3" fill="#fff" stroke="#E00000" stroke-width="1"/><circle cx="7.4" cy="3.3" r="1.3" fill="#fff" stroke="#E00000" stroke-width="1"/><circle cx="18.6" cy="8.2" r="1.3" fill="#fff" stroke="#E00000" stroke-width="1"/><circle cx="14.4" cy="17.5" r="1.3" fill="#fff" stroke="#E00000" stroke-width="1"/></svg>
<div class="a" style="left:610px;top:88px;width:22px;height:22px;border:1px solid #8A8794;background:linear-gradient(#f5f8fb,#e6ecf3);box-shadow:1px 1px 1.5px rgba(60,70,90,.35)"></div>
<svg class="a" style="left:610px;top:88px;" width="22" height="22" viewBox="0 0 22 22"><path d="M3.3 3.3L8.8 5.5 3.8 14.5Q5 19 9.6 19.2Q14 19 17 15" fill="none" stroke="#A00000" stroke-width="1.2"/><path d="M17.5 2.6v8" stroke="#D02020" stroke-width="2" stroke-dasharray="1.6 .9"/><path d="M15.8 10.5h3.4l-1.7 2.2z" fill="#D02020"/><path d="M15.3 17.2h6l-3 3z" fill="#8B0000"/></svg>
<div class="a" style="left:638px;top:88px;width:22px;height:22px;border:1px solid #8A8794;background:linear-gradient(#f5f8fb,#e6ecf3);box-shadow:1px 1px 1.5px rgba(60,70,90,.35)"></div>
<svg class="a" style="left:638px;top:88px;" width="22" height="22" viewBox="0 0 22 22"><text x="2.6" y="18.2" font-family="Liberation Serif" font-size="20.5" fill="#A00000">A</text><path d="M15 17h6l-3 3z" fill="#8B0000"/></svg>
<div class="a" style="left:665px;top:86px;width:1px;height:27px;background:#7189A5;"></div>
<div class="a" style="left:672px;top:88px;width:22px;height:22px;border:1px solid #8A8794;background:linear-gradient(#f5f8fb,#e6ecf3);box-shadow:1px 1px 1.5px rgba(60,70,90,.35)"></div>
<svg class="a" style="left:672px;top:88px;" width="22" height="22" viewBox="0 0 22 22"><rect x="4.5" y="4.4" width="13.3" height="13.3" fill="none" stroke="#A00000" stroke-width="1.3"/><path d="M2 4.4h18.2M2 17.7h18.2M4.5 2v18.2M17.8 2v18.2" stroke="#A00000" stroke-width="1.1"/><path d="M4.8 11.2L11.3 4.7M4.8 15.6L15.7 4.7M7.5 17.4L17.5 7.4M11.9 17.4L17.5 11.8" stroke="#E04848" stroke-width=".9"/></svg>
<div class="a" style="left:700px;top:88px;width:22px;height:22px;border:1px solid #8A8794;background:linear-gradient(#f5f8fb,#e6ecf3);box-shadow:1px 1px 1.5px rgba(60,70,90,.35)"></div>
<svg class="a" style="left:700px;top:88px;" width="22" height="22" viewBox="0 0 22 22"><rect x="3.2" y="4.4" width="15.3" height="13.2" fill="none" stroke="#A80000" stroke-width="1.4"/><path d="M3.6 17.2L7.8 11.3 10.6 14 13 12.3 18.2 17.2z" fill="#D03838"/><circle cx="13.7" cy="8.6" r="1.8" fill="#D84040"/><path d="M15.2 17h6l-3 3z" fill="#8B0000"/></svg>
<div class="a" style="left:727px;top:86px;width:1px;height:27px;background:#7189A5;"></div>
<div class="a" style="left:734px;top:88px;width:22px;height:22px;border:1px solid #8E8C98;background:#D1E0EF"></div>
<svg class="a" style="left:734px;top:88px;" width="22" height="22" viewBox="0 0 22 22"><path d="M2.4 11.5H20M7.5 7v9" stroke="#939390" stroke-width="1.1"/><path d="M14.5 17h6l-3 3z" fill="#333"/></svg>
<div class="a" style="left:762px;top:88px;width:22px;height:22px;border:1px solid #8E8C98;background:#D1E0EF"></div>
<svg class="a" style="left:762px;top:88px;" width="22" height="22" viewBox="0 0 22 22"><circle cx="11.4" cy="11.4" r="6.3" fill="none" stroke="#939390" stroke-width="1"/><path d="M4.5 4.5l13.8 13.8M18.3 4.5L4.5 18.3" stroke="#939390" stroke-width=".9"/><circle cx="11.4" cy="11.4" r="1.2" fill="#F4F6F8" stroke="#939390" stroke-width=".8"/></svg>
<div class="a" style="left:789px;top:86px;width:1px;height:27px;background:#7189A5;"></div>
<div class="a" style="left:796px;top:88px;width:22px;height:22px;border:1px solid #8A8794;background:linear-gradient(#f5f8fb,#e6ecf3);box-shadow:1px 1px 1.5px rgba(60,70,90,.35)"></div>
<svg class="a" style="left:796px;top:88px;" width="22" height="22" viewBox="0 0 22 22"><path d="M2.3 9.3L6.8 4.9V7.3H15.4V4.9L20 9.3 15.4 13.7V11.3H6.8V13.7Z" fill="none" stroke="#A00000" stroke-width="1.2" stroke-linejoin="miter"/><circle cx="11.5" cy="15.6" r="1.2" fill="#fff" stroke="#E00000" stroke-width="1"/><path d="M14.8 17h6l-3 3z" fill="#8B0000"/></svg>
<div class="a" style="left:823px;top:86px;width:1px;height:27px;background:#7189A5;"></div>
<div class="a" style="left:830px;top:88px;width:22px;height:22px;border:1px solid #8A8794;background:linear-gradient(#f5f8fb,#e6ecf3);box-shadow:1px 1px 1.5px rgba(60,70,90,.35)"></div>
<svg class="a" style="left:830px;top:88px;" width="22" height="22" viewBox="0 0 22 22"><path d="M4.2 4v14M6.8 4v14M8.8 4v14M11 4v14M13.8 4v14M15.9 4v14M18.4 4v14" stroke="#A00000" stroke-width="1.3"/><path d="M4.2 4v14M11 4v14" stroke="#A00000" stroke-width="2"/></svg>
<div class="a" style="left:15px;top:130px;width:150px;height:21px;border:1px solid #A3A3A3;background:#D1E0EF"></div>
<div class="a" style="left:146px;top:131px;width:18px;height:19px;background:#A8A8A8;"></div>
<svg class="a" style="left:145.5px;top:131px;" width="19" height="19" viewBox="0 0 19 19"><path d="M4.5 7.5h10l-5 5z" fill="#fff"/></svg>
<div class="t" style="left:18.6px;top:135px;font-size:12px;color:#6D6D6D;letter-spacing:-0.788px;">Cutting</div>
<div class="a" style="left:172px;top:130px;width:11px;height:22px;border:1px solid #8A8794;border-right-color:#8A8794;border-bottom-color:#fff;background:#fff"></div>
<div class="a" style="left:173px;top:131px;width:9px;height:3px;background:#C8D0DC;"></div>
<div class="a" style="left:175px;top:134px;width:5px;height:15px;background:#FF0000;"></div>
<div class="a" style="left:182px;top:130px;width:11px;height:22px;border:1px solid #8A8794;background:#fff;box-shadow:1px 1px 1px rgba(60,70,90,.3)"></div>
<div class="a" style="left:184px;top:133px;width:5px;height:15px;background:#00FF00;"></div>
<div class="a" style="left:192px;top:130px;width:11px;height:22px;border:1px solid #8A8794;background:#fff;box-shadow:1px 1px 1px rgba(60,70,90,.3)"></div>
<div class="a" style="left:194px;top:133px;width:5px;height:15px;background:#808000;"></div>
<div class="a" style="left:202px;top:130px;width:10px;height:22px;border:1px solid #8A8794;background:#fff;box-shadow:1px 1px 1px rgba(60,70,90,.3)"></div>
<div class="a" style="left:204px;top:133px;width:5px;height:15px;background:#008080;"></div>
<div class="a" style="left:217px;top:128px;width:1px;height:26px;background:#7189A5;"></div>
<div class="a" style="left:224px;top:130px;width:22px;height:22px;border:1px solid #7E7C88;border-right-color:#fff;border-bottom-color:#fff;background:#C2CBDB"></div>
<svg class="a" style="left:224px;top:130px;" width="22" height="22" viewBox="0 0 22 22"><rect x="9.5" y="3.5" width="10.5" height="16.0" fill="none" stroke="#F02020" stroke-width="1.1" stroke-dasharray="1.1 1.1"/><rect x="2.8" y="2.8" width="4" height="4.6" fill="none" stroke="#A00000" stroke-width="1.3"/><rect x="11.5" y="5.5" width="6" height="12" rx="2" fill="none" stroke="#A00000" stroke-width="1.3"/><rect x="2.8" y="11.5" width="11.6" height="3.8" fill="none" stroke="#A00000" stroke-width="1.3"/></svg>
<div class="a" style="left:252px;top:130px;width:22px;height:22px;border:1px solid #8A8794;background:linear-gradient(#f5f8fb,#e6ecf3);box-shadow:1px 1px 1.5px rgba(60,70,90,.35)"></div>
<svg class="a" style="left:252px;top:130px;" width="22" height="22" viewBox="0 0 22 22"><rect x="9.5" y="3.5" width="10.5" height="16.0" fill="none" stroke="#F02020" stroke-width="1.1" stroke-dasharray="1.1 1.1"/><rect x="2.7" y="2.8" width="4" height="4.6" fill="none" stroke="#A00000" stroke-width="1.3"/><rect x="11.7" y="5.8" width="5.8" height="11.6" rx="2" fill="none" stroke="#A00000" stroke-width="1.3"/></svg>
<div class="a" style="left:280px;top:130px;width:22px;height:22px;border:1px solid #8A8794;background:linear-gradient(#f5f8fb,#e6ecf3);box-shadow:1px 1px 1.5px rgba(60,70,90,.35)"></div>
<svg class="a" style="left:280px;top:130px;" width="22" height="22" viewBox="0 0 22 22"><ellipse cx="11" cy="9" rx="7.4" ry="6.3" fill="none" stroke="#A00000" stroke-width="1.2"/><path d="M9.5 14.5l4.3 4.8" stroke="#A00000" stroke-width="1.2"/><circle cx="9.6" cy="14.6" r="1.1" fill="#A00000"/></svg>
<div class="a" style="left:308px;top:130px;width:22px;height:22px;border:1px solid #8A8794;background:linear-gradient(#f5f8fb,#e6ecf3);box-shadow:1px 1px 1.5px rgba(60,70,90,.35)"></div>
<svg class="a" style="left:308px;top:130px;" width="22" height="22" viewBox="0 0 22 22"><path d="M2.9 3.4h15.9v6.7l-5.4 4.1v4.4h-4.4v-4.4l-6.1-4.1z" fill="none" stroke="#A00000" stroke-width="1.3"/><rect x="5" y="5.5" width="11.8" height="2.6" fill="#D02828"/></svg>
<div class="a" style="left:336px;top:128px;width:1px;height:26px;background:#7189A5;"></div>
<div class="a" style="left:8px;top:159px;width:667px;height:2px;background:#6B6B6B;"></div>
<div class="a" style="left:8px;top:161px;width:2px;height:429px;background:#A0A0A0;"></div>
<div class="a" style="left:9px;top:161px;width:1px;height:429px;background:#6B6B6B;"></div>
<div class="a" style="left:10px;top:161px;width:649px;height:380px;background:#FFFFFF;"></div>
<div class="a" style="left:659px;top:161px;width:16px;height:380px;background:#F0F0F0;"></div>
<div class="a" style="left:659px;top:278px;width:15px;height:145px;background:#C8C8C8;"></div>
<svg class="a" style="left:659px;top:162px;" width="16" height="16" viewBox="0 0 16 16"><path d="M4.5 10.5l3.5-3.5 3.5 3.5" fill="none" stroke="#555" stroke-width="1.9"/></svg>
<svg class="a" style="left:659px;top:524px;" width="16" height="16" viewBox="0 0 16 16"><path d="M4.5 6l3.5 3.5 3.5-3.5" fill="none" stroke="#555" stroke-width="1.9"/></svg>
<div class="a" style="left:10px;top:541px;width:665px;height:16px;background:#F0F0F0;"></div>
<div class="a" style="left:228px;top:541px;width:212px;height:15px;background:#C8C8C8;"></div>
<svg class="a" style="left:10px;top:541px;" width="16" height="16" viewBox="0 0 16 16"><path d="M10 4.5l-3.5 3.5 3.5 3.5" fill="none" stroke="#555" stroke-width="1.9"/></svg>
<svg class="a" style="left:642px;top:541px;" width="16" height="16" viewBox="0 0 16 16"><path d="M6 4.5l3.5 3.5-3.5 3.5" fill="none" stroke="#555" stroke-width="1.9"/></svg>
<svg class="a" style="left:10px;top:161px;" width="649" height="380" viewBox="0 0 649 380"><path d="M32.5 4V377" stroke="#008080" stroke-width="1" stroke-dasharray="4 4"/><path d="M3 116.5H649" stroke="#008080" stroke-width="1" stroke-dasharray="4 4"/><path d="M615.5 117V266" stroke="#C8C890" stroke-width="1"/><path d="M43 262.5H605" stroke="#B8B878" stroke-width="1"/><path d="M33 262.5h4M611 262.5h4" stroke="#808000" stroke-width="1"/><path d="M37 261h6v3h-3v-1h-3z" fill="#808000"/><path d="M605 261h6v2h-3v1h-3z" fill="#808000"/><rect x="29.5" y="113.5" width="6" height="6" fill="none" stroke="#000" stroke-width="1.6"/><rect x="611.5" y="113.5" width="6" height="6" fill="#000" stroke="#000" stroke-width="1.6"/></svg>
<div class="t" style="left:294.8px;top:410.2px;font-size:12.3px;color:#787800;letter-spacing:-0.342px;">ActiveX [25,40]</div>
<div class="a" style="left:675px;top:161px;width:1px;height:429px;background:#8F99AA;"></div>
<div class="a" style="left:676px;top:161px;width:3px;height:429px;background:#DDE5EF;"></div>
<div class="a" style="left:679px;top:161px;width:1px;height:429px;background:#A3ADBD;"></div>
<div class="a" style="left:675px;top:159px;width:5px;height:2px;background:#6E6E6E;"></div>
<div class="a" style="left:677px;top:368px;width:1px;height:1px;background:#FFFFFF;"></div>
<div class="a" style="left:677px;top:372px;width:1px;height:1px;background:#FFFFFF;"></div>
<div class="a" style="left:677px;top:376px;width:1px;height:1px;background:#FFFFFF;"></div>
<div class="a" style="left:677px;top:380px;width:1px;height:1px;background:#FFFFFF;"></div>
<div class="a" style="left:677px;top:384px;width:1px;height:1px;background:#FFFFFF;"></div>
<div class="a" style="left:680px;top:159px;width:382px;height:4px;background:#6E6E6E;"></div>
<div class="a" style="left:680px;top:159px;width:1px;height:396px;background:#A0A0A0;"></div>
<div class="a" style="left:681px;top:159px;width:1px;height:396px;background:#6B6B6B;"></div>
<div class="a" style="left:682px;top:163px;width:376px;height:392px;background:#FFFFFF;"></div>
<div class="a" style="left:683px;top:164px;width:375px;height:374px;background:#D1E0F1;"></div>
<div class="a" style="left:1058px;top:161px;width:4px;height:395px;background:#FFFFFF;"></div>
<div class="a" style="left:1059px;top:163px;width:2px;height:393px;background:#E4E4E4;"></div>
<div class="a" style="left:1061px;top:557px;width:1px;height:33px;background:#FFFFFF;"></div>
<div class="a" style="left:683px;top:180px;width:375px;height:2px;background:#EEF0F2;"></div>
<div class="a" style="left:683px;top:184px;width:375px;height:1px;background:#EEF0F2;"></div>
<div class="a" style="left:683px;top:201px;width:375px;height:1px;background:#EEF0F2;"></div>
<div class="a" style="left:683px;top:218px;width:375px;height:1px;background:#EEF0F2;"></div>
<div class="a" style="left:683px;top:235px;width:375px;height:1px;background:#EEF0F2;"></div>
<div class="a" style="left:683px;top:252px;width:375px;height:1px;background:#EEF0F2;"></div>
<div class="a" style="left:683px;top:269px;width:375px;height:1px;background:#EEF0F2;"></div>
<div class="a" style="left:683px;top:286px;width:375px;height:1px;background:#EEF0F2;"></div>
<div class="a" style="left:683px;top:303px;width:375px;height:1px;background:#EEF0F2;"></div>
<div class="a" style="left:683px;top:320px;width:375px;height:1px;background:#EEF0F2;"></div>
<div class="a" style="left:683px;top:337px;width:375px;height:1px;background:#EEF0F2;"></div>
<div class="a" style="left:683px;top:354px;width:375px;height:1px;background:#EEF0F2;"></div>
<div class="a" style="left:683px;top:371px;width:375px;height:1px;background:#EEF0F2;"></div>
<div class="a" style="left:683px;top:388px;width:375px;height:1px;background:#EEF0F2;"></div>
<div class="a" style="left:683px;top:405px;width:375px;height:1px;background:#EEF0F2;"></div>
<div class="a" style="left:683px;top:422px;width:375px;height:1px;background:#EEF0F2;"></div>
<div class="a" style="left:683px;top:439px;width:375px;height:1px;background:#EEF0F2;"></div>
<div class="a" style="left:683px;top:456px;width:375px;height:1px;background:#EEF0F2;"></div>
<div class="a" style="left:683px;top:473px;width:375px;height:1px;background:#EEF0F2;"></div>
<div class="a" style="left:683px;top:490px;width:375px;height:1px;background:#EEF0F2;"></div>
<div class="a" style="left:683px;top:507px;width:375px;height:1px;background:#EEF0F2;"></div>
<div class="a" style="left:683px;top:524px;width:375px;height:1px;background:#EEF0F2;"></div>
<div class="a" style="left:761px;top:164px;width:2px;height:16px;background:#EEF0F2;"></div>
<div class="a" style="left:761px;top:180px;width:1px;height:358px;background:#EEF0F2;"></div>
<div class="a" style="left:762px;top:182px;width:1px;height:356px;background:#E0E8F1;"></div>
<div class="a" style="left:841px;top:164px;width:2px;height:16px;background:#EEF0F2;"></div>
<div class="a" style="left:841px;top:180px;width:1px;height:358px;background:#EEF0F2;"></div>
<div class="a" style="left:842px;top:182px;width:1px;height:356px;background:#E0E8F1;"></div>
<div class="a" style="left:921px;top:164px;width:2px;height:16px;background:#EEF0F2;"></div>
<div class="a" style="left:921px;top:180px;width:1px;height:358px;background:#EEF0F2;"></div>
<div class="a" style="left:922px;top:182px;width:1px;height:356px;background:#E0E8F1;"></div>
<div class="a" style="left:1001px;top:164px;width:2px;height:16px;background:#EEF0F2;"></div>
<div class="a" style="left:1001px;top:180px;width:1px;height:358px;background:#EEF0F2;"></div>
<div class="a" style="left:1002px;top:182px;width:1px;height:356px;background:#E0E8F1;"></div>
<div class="t" style="left:684.5px;top:165.5px;font-size:12px;color:#000;letter-spacing:0.248px;">Name</div>
<div class="t" style="left:764.5px;top:165.5px;font-size:12px;color:#000;letter-spacing:0.130px;">Group</div>
<div class="t" style="left:844.6px;top:165.5px;font-size:12px;color:#000;letter-spacing:-0.556px;">Expression</div>
<div class="t" style="left:971px;top:165.5px;font-size:12px;color:#000;letter-spacing:-0.260px;">Value</div>
<div class="t" style="left:1003.5px;top:165.5px;font-size:12px;color:#000;letter-spacing:0.555px;">Min</div>
<svg class="a" style="left:685px;top:186px;" width="15" height="12" viewBox="0 0 15 12"><path d="M5.3 1.6H2.8V10.2H5.3M9.8 1.6H12.3V10.2H9.8" fill="none" stroke="#980000" stroke-width="1.15"/></svg>
<div class="t" style="left:704px;top:186.5px;font-size:12px;color:#000;letter-spacing:-0.097px;">ActiveX</div>
<div class="t" style="left:766px;top:186.5px;font-size:12px;color:#000;letter-spacing:0.248px;">Main</div>
<svg class="a" style="left:843px;top:185px;" width="6" height="6" viewBox="0 0 6 6"><path d="M0 0h6l-6 6z" fill="#8C8C8C"/></svg>
<div class="t" style="left:846px;top:186.5px;font-size:12px;color:#000;letter-spacing:-0.405px;">25,40</div>
<div class="t" style="left:970px;top:186.5px;font-size:12px;color:#000;letter-spacing:-0.405px;">25,40</div>
<svg class="a" style="left:1003px;top:185px;" width="6" height="6" viewBox="0 0 6 6"><path d="M0 0h6l-6 6z" fill="#8C8C8C"/></svg>
<div class="a" style="left:1005px;top:186.5px;width:53px;height:14px;overflow:hidden">
<div class="t" style="left:0.5px;top:0px;font-size:12px;color:#000;letter-spacing:0.558px;">No bound</div>
</div>
<div class="a" style="left:682px;top:538px;width:376px;height:17px;background:#F0F0F0;"></div>
<div class="a" style="left:699px;top:539px;width:230px;height:15px;background:#C8C8C8;"></div>
<svg class="a" style="left:682px;top:538px;" width="16" height="17" viewBox="0 0 16 17"><path d="M10 4.5l-3.5 4 3.5 4" fill="none" stroke="#555" stroke-width="1.9"/></svg>
<svg class="a" style="left:1041px;top:538px;" width="16" height="17" viewBox="0 0 16 17"><path d="M6 4.5l3.5 4-3.5 4" fill="none" stroke="#555" stroke-width="1.9"/></svg>
<div class="a" style="left:682px;top:555px;width:378px;height:2px;background:#FFFFFF;"></div>
<div class="a" style="left:11px;top:562px;width:634px;height:1px;background:#6F8BAA;"></div>
<div class="a" style="left:11px;top:562px;width:1px;height:28px;background:#6F8BAA;"></div>
<div class="a" style="left:644px;top:562px;width:1px;height:28px;background:#6F8BAA;"></div>
<div class="a" style="left:11px;top:589px;width:634px;height:1px;background:#6F8BAA;"></div>
<div class="a" style="left:44px;top:562px;width:72px;height:1px;background:#D1E0EF;"></div>
<div class="a" style="left:43px;top:562px;width:1px;height:21px;background:#6F8BAA;"></div>
<div class="a" style="left:115px;top:562px;width:1px;height:21px;background:#6F8BAA;"></div>
<div class="a" style="left:43px;top:582px;width:73px;height:1px;background:#6F8BAA;"></div>
<div class="a" style="left:17px;top:569px;width:17px;height:17px;border:1px solid #8E8C98;background:#D1E0EF"></div>
<svg class="a" style="left:17px;top:569px;" width="17" height="17" viewBox="0 0 17 17"><circle cx="5.3" cy="8.6" r="1.4" fill="#8f8f8f"/><circle cx="8.8" cy="8.6" r="1.4" fill="#8f8f8f"/><circle cx="12.3" cy="8.6" r="1.4" fill="#8f8f8f"/></svg>
<svg class="a" style="left:49px;top:564px;" width="14" height="16" viewBox="0 0 14 16"><path d="M1.5 1.5h7.5l3.5 3.5v9.5h-11z" fill="#fff" stroke="#A00000" stroke-width="1.3"/><path d="M9 1.5v3.5h3.5" fill="none" stroke="#A00000" stroke-width="1"/><path d="M3.5 12.5l1.5-5h4l1 5" fill="none" stroke="#00D000" stroke-width="1"/><path d="M4 12.8h5.5" stroke="#8000FF" stroke-width="1.2"/></svg>
<div class="t" style="left:64px;top:567px;font-size:12px;color:#000;letter-spacing:-0.836px;">Drawing1</div>
<div class="a" style="left:650px;top:569px;width:19px;height:19px;border:1px solid #8A8794;background:linear-gradient(#f5f8fb,#e6ecf3);box-shadow:1px 1px 1.5px rgba(60,70,90,.35)"></div>
<svg class="a" style="left:650px;top:569px;" width="19" height="19" viewBox="0 0 19 19"><path d="M7 4.8v9.4l5.3-4.7z" fill="#960000"/></svg>
<div class="a" style="left:682px;top:562px;width:377px;height:1px;background:#6F8BAA;"></div>
<div class="a" style="left:682px;top:562px;width:1px;height:28px;background:#6F8BAA;"></div>
<div class="a" style="left:1058px;top:562px;width:1px;height:28px;background:#6F8BAA;"></div>
<div class="a" style="left:682px;top:589px;width:377px;height:1px;background:#6F8BAA;"></div>
<div class="a" style="left:683px;top:562px;width:7px;height:1px;background:#6F8BAA;"></div>
<div class="a" style="left:690px;top:562px;width:1px;height:21px;background:#6F8BAA;"></div>
<div class="a" style="left:690px;top:582px;width:87px;height:1px;background:#6F8BAA;"></div>
<div class="a" style="left:691px;top:562px;width:86px;height:1px;background:#D1E0EF;"></div>
<div class="a" style="left:776px;top:562px;width:68px;height:21px;background:#C6BFC7;border:1px solid #6F8BAA;overflow:hidden"></div>
<div class="a" style="left:843px;top:562px;width:68px;height:21px;background:#C6BFC7;border:1px solid #6F8BAA;overflow:hidden"></div>
<div class="a" style="left:910px;top:562px;width:68px;height:21px;background:#C6BFC7;border:1px solid #6F8BAA;overflow:hidden"></div>
<div class="a" style="left:977px;top:562px;width:63px;height:21px;background:#C6BFC7;border:1px solid #6F8BAA;overflow:hidden"></div>
<svg class="a" style="left:696px;top:565px;" width="16" height="16" viewBox="0 0 16 16"><path d="M4 1.5H2v7h2M10 1.5h2v7h-2" fill="none" stroke="#A00000" stroke-width="1.4"/><path d="M2.5 12.5h10" stroke="#C00000" stroke-width="1"/><path d="M1 12.5l2.5-2v4zM14 12.5l-2.5-2v4z" fill="#C00000"/></svg>
<div class="t" style="left:711.3px;top:567px;font-size:12px;color:#000;letter-spacing:-0.952px;"><span class="u">P</span>arameters</div>
<svg class="a" style="left:783.5px;top:564px;" width="16" height="16" viewBox="0 0 16 16"><path d="M7 1.2l4.4 4.1-4.4 4.1-4.4-4.1z" fill="none" stroke="#C00000" stroke-width="1.1"/><path d="M2 10.2L7 15l5-4.8" fill="none" stroke="#C00000" stroke-width="2.4"/></svg>
<div class="t" style="left:798.7px;top:567px;font-size:12px;color:#1a1a1a;letter-spacing:-1.082px;">Layers &amp;</div>
<svg class="a" style="left:848px;top:565px;" width="16" height="16" viewBox="0 0 16 16"><path d="M8 1v6M5.5 5l2.5 3 2.5-3" fill="none" stroke="#B00000" stroke-width="1.1"/><path d="M1 12h14" stroke="#B00000"/><circle cx="8" cy="12" r="2" fill="#fff" stroke="#B00000"/></svg>
<div class="a" style="left:865px;top:567px;width:42px;height:15px;overflow:hidden">
<div class="t" style="left:0.4px;top:0px;font-size:12px;color:#1a1a1a;letter-spacing:-0.725px;position:absolute"><span class="u">R</span>elations</div>
</div>
<svg class="a" style="left:914px;top:565px;" width="16" height="16" viewBox="0 0 16 16"><path d="M1.5 3v10M14.5 3v10" stroke="#B00000" stroke-width="1.3"/><path d="M3 8h10" stroke="#B00000"/><path d="M3 8l2.5-2v4zM13 8l-2.5-2v4z" fill="#B00000"/></svg>
<div class="a" style="left:932px;top:567px;width:42px;height:15px;overflow:hidden">
<div class="t" style="left:0.4px;top:0px;font-size:12px;color:#1a1a1a;letter-spacing:-1.169px;position:absolute"><span class="u">D</span>imensions</div>
</div>
<svg class="a" style="left:982px;top:565px;" width="16" height="16" viewBox="0 0 16 16"><path d="M2.5 2v13M7.5 2v13" stroke="#A00000" stroke-width="2"/><path d="M12.5 2v13" stroke="#E03030" stroke-width="2"/></svg>
<div class="t" style="left:999px;top:567px;font-size:12px;color:#1a1a1a;letter-spacing:-0.863px;"><span class="u">S</span>tyles</div>
<div class="a" style="left:8px;top:590px;width:1054px;height:1px;background:#FFFFFF;"></div>
<div class="a" style="left:8px;top:591px;width:1054px;height:16px;background:#D1E0EF;"></div>
<div class="t" style="left:12.6px;top:593.6px;font-size:11.8px;color:#000;letter-spacing:-0.491px;">Click on object to select it, use CTRL to select a number of objects. Click and hold to begin multiple selection.</div>
<div class="a" style="left:862px;top:592px;width:200px;height:15px;border:1px solid #A0A0A0;border-right-color:#fff;border-bottom-color:#fff"></div>
</body></html>
